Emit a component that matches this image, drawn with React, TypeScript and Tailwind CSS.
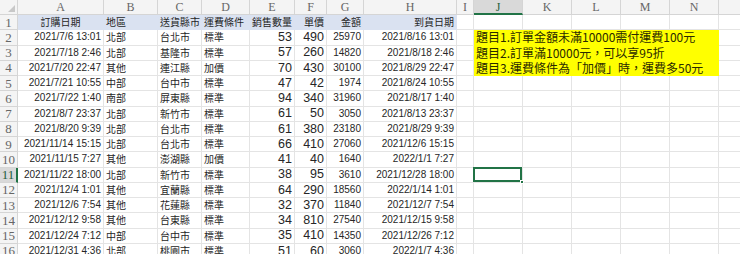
import React from "react";

const letters = ["A","B","C","D","E","F","G","H","I","J","K","L","M","N",""];

const data: string[][] = [
  ["2021/7/6 13:01","北部","台北市","標準","53","490","25970","2021/8/16 13:01"],
  ["2021/7/18 2:46","北部","基隆市","標準","57","260","14820","2021/8/18 2:46"],
  ["2021/7/20 22:47","其他","連江縣","加價","70","430","30100","2021/8/29 22:47"],
  ["2021/7/21 10:55","中部","台中市","標準","47","42","1974","2021/8/24 10:55"],
  ["2021/7/22 1:40","南部","屏東縣","標準","94","340","31960","2021/8/17 1:40"],
  ["2021/8/7 23:37","北部","新竹市","標準","61","50","3050","2021/8/13 23:37"],
  ["2021/8/20 9:39","北部","台北市","標準","61","380","23180","2021/8/29 9:39"],
  ["2021/11/14 15:15","北部","台北市","標準","66","410","27060","2021/12/6 15:15"],
  ["2021/11/15 7:27","其他","澎湖縣","加價","41","40","1640","2022/1/1 7:27"],
  ["2021/11/22 18:00","北部","新竹市","標準","38","95","3610","2021/12/28 18:00"],
  ["2021/12/4 1:01","其他","宜蘭縣","標準","64","290","18560","2022/1/14 1:01"],
  ["2021/12/6 7:54","其他","花蓮縣","標準","32","370","11840","2021/12/7 7:54"],
  ["2021/12/12 9:58","其他","台東縣","標準","34","810","27540","2021/12/15 9:58"],
  ["2021/12/24 7:12","中部","台中市","標準","35","410","14350","2021/12/26 7:12"],
  ["2021/12/31 4:36","北部","桃園市","標準","51","60","3060","2022/1/7 4:36"],
];

const headers = ["訂購日期","地區","送貨縣市","運費條件","銷售數量","單價","金額","到貨日期"];
const headerAlign = [
  "justify-center","justify-start","justify-start","justify-start",
  "justify-end","justify-end","justify-end","justify-end",
];

const dataCls = [
  "justify-end font-['Liberation_Sans',sans-serif] text-[10px]",
  "justify-start font-['Noto_Sans_CJK_TC',sans-serif] text-[10px]",
  "justify-start font-['Noto_Sans_CJK_TC',sans-serif] text-[10px]",
  "justify-start font-['Noto_Sans_CJK_TC',sans-serif] text-[10px]",
  "justify-end font-['Liberation_Sans',sans-serif] text-[12.5px]",
  "justify-end font-['Liberation_Sans',sans-serif] text-[12.5px]",
  "justify-end font-['Liberation_Sans',sans-serif] text-[10px]",
  "justify-end font-['Liberation_Sans',sans-serif] text-[10px]",
];

const notes = [
  "題目1.訂單金額未滿10000需付運費100元",
  "題目2.訂單滿10000元，可以享95折",
  "題目3.運費條件為「加價」時，運費多50元",
];

const cell = "flex items-center overflow-visible whitespace-nowrap px-[2px] leading-none text-[#262626] border-r border-b border-[#e4e4e4]";
const rowHead = "flex items-center justify-center font-['Liberation_Serif',serif] text-[13px] leading-none text-[#666] bg-[#f4f4f4] border-r border-b border-[#d5d5d5]";
const colHead = "flex items-center justify-center font-['Liberation_Serif',serif] text-[12px] leading-none text-[#666] bg-[#f4f4f4] border-r border-b border-[#d5d5d5]";

export default function App() {
  const cells: React.ReactNode[] = [];
  cells.push(
    <div key="corner" className="relative bg-[#f4f4f4] border-r border-b border-[#d5d5d5]">
      <div className="absolute right-[2px] bottom-[2px] w-0 h-0 border-l-[7px] border-l-transparent border-b-[7px] border-b-[#c8c8c8]" />
    </div>
  );
  letters.forEach((l, i) => {
    cells.push(
      l === "J" ? (
        <div key={"h" + i} className="flex items-center justify-center font-['Liberation_Serif',serif] text-[12px] leading-none text-[#1f5e3c] bg-[#d9d9d9] border-r border-[#d5d5d5] border-b-2 border-b-[#217346]">
          {l}
        </div>
      ) : (
        <div key={"h" + i} className={colHead}>{l}</div>
      )
    );
  });

  for (let r = 1; r <= 16; r++) {
    cells.push(
      r === 11 ? (
        <div key={"r" + r} className="flex items-center justify-center font-['Liberation_Serif',serif] text-[13px] leading-none text-[#1f5e3c] bg-[#d9d9d9] border-b border-[#d5d5d5] border-r-2 border-r-[#217346]">
          {r}
        </div>
      ) : (
        <div key={"r" + r} className={rowHead}>{r}</div>
      )
    );
    for (let c = 0; c < 15; c++) {
      const k = `c${r}-${c}`;
      if (r === 1 && c < 8) {
        cells.push(
          <div key={k} className={`flex items-center overflow-visible whitespace-nowrap px-[2px] leading-none text-[#262626] bg-[#dae2f1] border-r border-b border-[#dae2f1] font-['Noto_Sans_CJK_TC',sans-serif] text-[10px] ${headerAlign[c]}`}>
            {headers[c]}
          </div>
        );
      } else if (r >= 2 && c < 8) {
        cells.push(
          <div key={k} className={`${cell} ${dataCls[c]}`}>{data[r - 2][c]}</div>
        );
      } else if (r >= 2 && r <= 4 && c === 9) {
        cells.push(
          <div key={k} className="col-span-5 flex items-center whitespace-nowrap pl-[2px] leading-none bg-[#ffff00] text-[#2a2a00] font-['Noto_Sans_CJK_TC',sans-serif] text-[12px] border-b border-[#ffff00]">
            {notes[r - 2]}
          </div>
        );
      } else if (r >= 2 && r <= 4 && c > 9 && c < 14) {
        continue;
      } else if (r === 11 && c === 9) {
        cells.push(
          <div key={k} className={`${cell} relative`}>
            <div className="absolute -left-[1px] -top-[1px] right-0 bottom-0 border-2 border-[#217346]" />
            <div className="absolute -right-[2px] -bottom-[2px] w-[4px] h-[4px] bg-[#217346] border border-white" />
          </div>
        );
      } else {
        cells.push(<div key={k} className={cell} />);
      }
    }
  }

  return (
    <div className="w-[740px] h-[254px] overflow-hidden bg-white">
      <div className="grid w-max grid-cols-[18px_86px_54px_44px_48px_45px_32px_37px_93px_17px_49px_49px_49px_49px_49px_49px] grid-rows-[15px_repeat(16,15.25px)]">
        {cells}
      </div>
    </div>
  );
}
